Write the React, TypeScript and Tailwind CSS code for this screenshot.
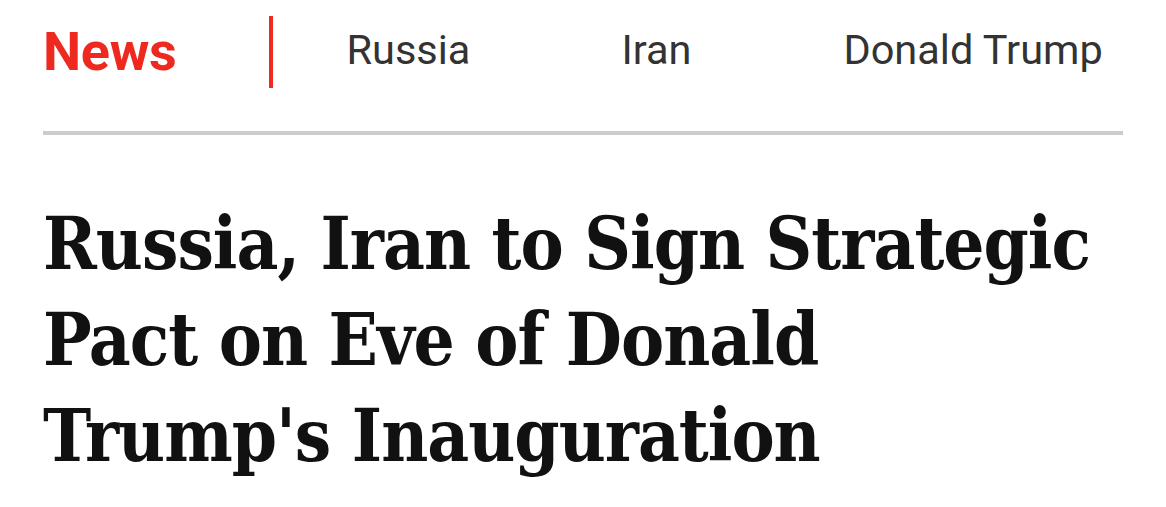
// News article header — section nav + headline

const topics = [
  { label: "Russia", className: "ml-[73px]" },
  { label: "Iran", className: "ml-[151px]" },
  { label: "Donald Trump", className: "ml-[152px]" },
];

export default function App() {
  return (
    <div className="w-[1166px] h-[507px] bg-white px-[43px] overflow-hidden">
      {/* ── Section nav ── */}
      <nav className="flex items-center pt-[16px] font-['Roboto',sans-serif]">
        <span className="text-[54px] font-bold leading-none text-[#ee2a20] tracking-[-0.3px]">
          News
        </span>
        <div className="ml-[93px] w-[4px] h-[72px] bg-[#ee2a20]" />
        {topics.map((t) => (
          <a
            key={t.label}
            href="#"
            className={`${t.className} text-[41.5px] leading-none text-[#333333] pb-[4px]`}
          >
            {t.label}
          </a>
        ))}
      </nav>

      <div className="mt-[43px] h-[4px] bg-[#cccccc]" />

      {/* ── Headline ── */}
      <h1 className="mt-[61px] whitespace-nowrap font-['DejaVu_Serif',serif] font-bold font-stretch-condensed text-[72px] leading-[96px] text-[#111111] tracking-[-1px]">
        Russia, Iran to Sign Strategic
        <br />
        Pact on Eve of Donald
        <br />
        Trump's Inauguration
      </h1>
    </div>
  );
}
